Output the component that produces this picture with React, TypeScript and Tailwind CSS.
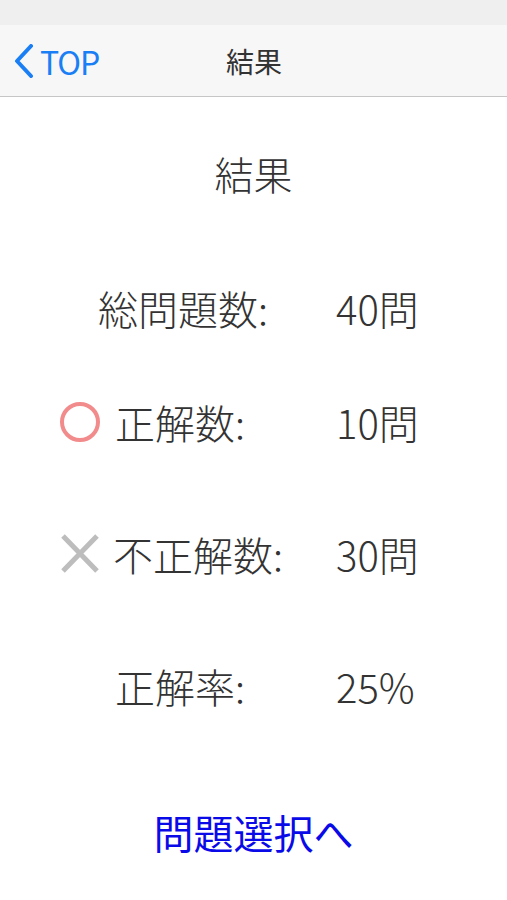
const FONT = "font-['Noto_Sans_CJK_JP','Noto_Sans',sans-serif]";

function Circle() {
  return (
    <svg width="42" height="42" viewBox="0 0 42 42">
      <circle cx="21" cy="21" r="18" fill="none" stroke="#f28b8b" strokeWidth="4" />
    </svg>
  );
}

function Cross() {
  return (
    <svg width="42" height="42" viewBox="0 0 42 42">
      <path d="M4 3 L38 38 M38 3 L4 38" stroke="#bdbdbd" strokeWidth="5" />
    </svg>
  );
}

export default function App() {
  return (
    <div className={`w-[507px] h-[900px] bg-white ${FONT} font-light text-[#333]`}>
      {/* status bar */}
      <div className="h-[25px] bg-[#efefef]" />

      {/* nav bar */}
      <div className="relative h-[72px] bg-[#f7f7f7] border-b border-[#c6c6c6] flex items-center font-normal">
        <div className="flex items-center pl-[14px] text-[#1a7ef5]">
          <svg width="20" height="34" viewBox="0 0 20 34">
            <path d="M17 2 L3 17 L17 32" fill="none" stroke="#1a7ef5" strokeWidth="4" strokeLinecap="round" strokeLinejoin="round" />
          </svg>
          <span className="ml-[6px] text-[32px] leading-none tracking-[-1px]">TOP</span>
        </div>
        <span className="absolute left-[226px] text-[28px] leading-none">結果</span>
      </div>

      {/* content */}
      <div className="flex flex-col">
        <div className="mt-[56px] h-[40px] flex items-center justify-center text-[39px] leading-none">結果</div>

        <div className="mt-[94px] h-[42px] flex items-center text-[40px] leading-none">
          <div className="w-[336px] pl-[98px]">総問題数:</div>
          <div>40問</div>
        </div>

        <div className="mt-[72px] h-[42px] flex items-center text-[40px] leading-none">
          <div className="w-[336px] pl-[59px] flex items-center">
            <Circle />
            <span className="ml-[14px]">正解数:</span>
          </div>
          <div>10問</div>
        </div>

        <div className="mt-[90px] h-[42px] flex items-center text-[40px] leading-none">
          <div className="w-[336px] pl-[59px] flex items-center">
            <Cross />
            <span className="ml-[12px]">不正解数:</span>
          </div>
          <div>30問</div>
        </div>

        <div className="mt-[90px] h-[42px] flex items-center text-[40px] leading-none">
          <div className="w-[336px] pl-[115px]">正解率:</div>
          <div>25%</div>
        </div>

        <div className="mt-[104px] h-[42px] flex items-center justify-center text-[40px] leading-none font-normal text-[#0a0ae8]">
          問題選択へ
        </div>
      </div>
    </div>
  );
}
